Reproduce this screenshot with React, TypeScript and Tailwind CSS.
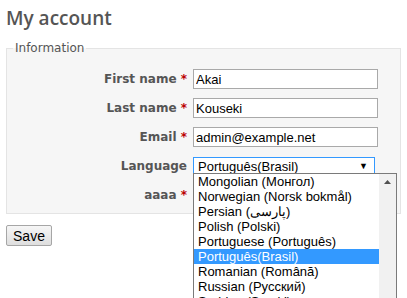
const languages = [
  'Mongolian (Монгол)',
  'Norwegian (Norsk bokmål)',
  'Persian (پارسی)',
  'Polish (Polski)',
  'Portuguese (Português)',
  'Português(Brasil)',
  'Romanian (Română)',
  'Russian (Русский)',
  'Serbian (Srpski)',
];

const Field = ({ label, value }: { label: string; value: string }) => (
  <div className="flex items-center h-[20px] mb-[9px]">
    <label className="w-[186px] text-right pr-[6px] text-[12px] font-bold text-[#555]">
      {label} <span className="text-[#bb0000]">*</span>
    </label>
    <input
      readOnly
      value={value}
      className="w-[185px] h-[20px] border border-[#a9a9a9] bg-white px-[2px] text-[13px] text-black font-['Liberation_Sans',Arial,sans-serif] outline-none"
    />
  </div>
);

export default function App() {
  return (
    <div className="relative w-[407px] h-[298px] overflow-hidden bg-white font-['DejaVu_Sans',Verdana,sans-serif]">
      <h2 className="px-[6px] pt-[6px] text-[19px] leading-[24px] font-semibold text-[#555] font-['Open_Sans',sans-serif]">
        My account
      </h2>

      <fieldset className="mx-[6px] mt-[9px] w-[395px] border border-[#e4e4e4] bg-[#f6f6f6] pl-[6px] pt-[12px] pb-[8px]">
        <legend className="px-[2px] text-[12px] text-[#555]">Information</legend>
        <div className="-ml-[6px]">
          <Field label="First name" value="Akai" />
          <Field label="Last name" value="Kouseki" />
          <Field label="Email" value="admin@example.net" />
          <div className="flex items-center h-[20px] mb-[9px]">
            <label className="w-[186px] text-right pr-[6px] text-[12px] font-bold text-[#555]">Language</label>
            <div className="relative w-[182px] h-[19px] border border-[#3399ff] bg-white pl-[4px] text-[13px] leading-[17px] text-black font-['Liberation_Sans',Arial,sans-serif]">
              Português(Brasil)
              <span className="absolute right-[6px] top-0 text-[9px] leading-[17px]">▼</span>
            </div>
          </div>
          <div className="flex items-center h-[20px]">
            <label className="w-[186px] text-right pr-[6px] text-[12px] font-bold text-[#555]">
              aaaa <span className="text-[#bb0000]">*</span>
            </label>
          </div>
        </div>
      </fieldset>

      <button className="mt-[11px] ml-[6px] w-[46px] h-[21px] border border-[#a6a6a6] rounded-[2px] bg-gradient-to-b from-[#f6f6f6] to-[#dedede] text-[14px] text-black font-['Liberation_Sans',Arial,sans-serif]">
        Save
      </button>

      <div className="absolute left-[193px] top-[173px] w-[204px] h-[140px] border border-[#7a7a7a] bg-white flex font-['Liberation_Sans',Arial,sans-serif]">
        <ul className="flex-1">
          {languages.map((lang) => (
            <li
              key={lang}
              className={`h-[15px] pl-[4px] text-[13px] leading-[15px] whitespace-nowrap ${
                lang === 'Português(Brasil)' ? 'bg-[#3399ff] text-white' : 'text-black'
              }`}
            >
              {lang}
            </li>
          ))}
        </ul>
        <div className="w-[17px] bg-[#f1f1f1] flex justify-center pt-[6px]">
          <svg width="7" height="4" viewBox="0 0 7 4">
            <path d="M3.5 0 L7 4 L0 4 Z" fill="#505050" />
          </svg>
        </div>
      </div>
    </div>
  );
}
